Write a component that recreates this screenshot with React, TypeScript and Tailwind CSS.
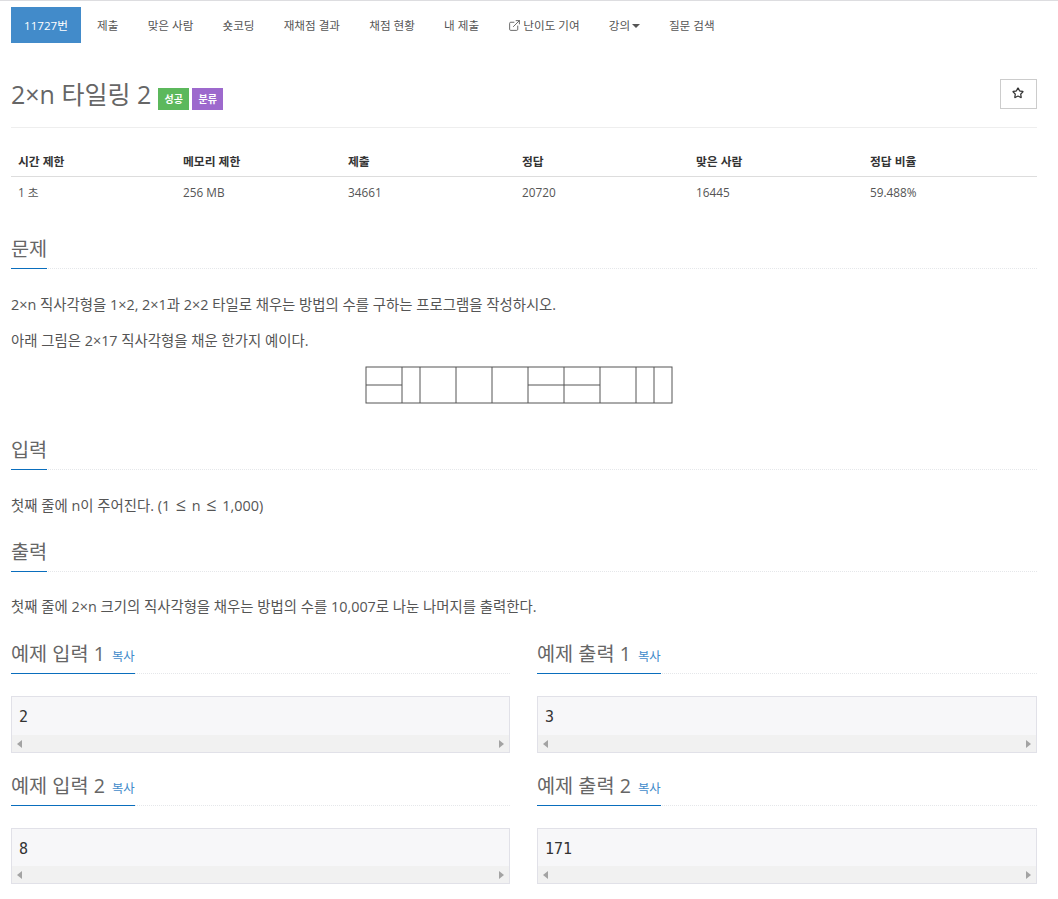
import { ExternalLink, Star } from 'lucide-react';

const font = { fontFamily: '"Open Sans", "Noto Sans CJK KR", sans-serif' };

const tabs = ['제출', '맞은 사람', '숏코딩', '재채점 결과', '채점 현황', '내 제출'];

const stats = [
  { label: '시간 제한', value: '1 초', width: 'w-[165px]' },
  { label: '메모리 제한', value: '256 MB', width: 'w-[165px]' },
  { label: '제출', value: '34661', width: 'w-[174px]' },
  { label: '정답', value: '20720', width: 'w-[174px]' },
  { label: '맞은 사람', value: '16445', width: 'w-[174px]' },
  { label: '정답 비율', value: '59.488%', width: 'flex-1' },
];

function Headline({ children, extra }: { children: React.ReactNode; extra?: string }) {
  return (
    <div className="h-[37px] border-b border-dotted border-[#e5e7ea]">
      <h2 className="inline-block h-[37px] border-b border-[#0a6ebd] text-[19.7px] leading-[33px] text-[#666]">
        {children}
        {extra && <a className="ml-[7px] text-[12.4px] font-normal text-[#428bca]">{extra}</a>}
      </h2>
    </div>
  );
}

function Sample({ title, value, short }: { title: string; value: string; short?: boolean }) {
  return (
    <div>
      <Headline extra="복사">{title}</Headline>
      <div className="mt-[22px] border border-[#e1e1e8] bg-[#f7f7f9]">
        <pre className={`${short ? 'h-[37px]' : 'h-[38px]'} pl-[7px] pt-[11px] text-[15px] leading-[18px] text-[#333]`} style={{ fontFamily: '"DejaVu Sans Mono", monospace' }}>
          {value}
        </pre>
        <div className="flex h-[17px] items-center justify-between bg-[#f1f1f1] px-[5px]">
          <span className="h-0 w-0 border-y-[4px] border-r-[5px] border-y-transparent border-r-[#a3a3a3]" />
          <span className="h-0 w-0 border-y-[4px] border-l-[5px] border-y-transparent border-l-[#a3a3a3]" />
        </div>
      </div>
    </div>
  );
}

function TilingFigure() {
  const verticals = [402, 420, 456, 492, 528, 564, 600, 636, 654];
  return (
    <svg width="308" height="38" viewBox="365 366 308 38" className="ml-[354px] mt-[15px] block">
      <rect x="366" y="367" width="306" height="36" fill="white" stroke="#555" strokeWidth="1" />
      {verticals.map((x) => (
        <line key={x} x1={x} y1="367" x2={x} y2="403" stroke="#555" strokeWidth="1" />
      ))}
      <line x1="366" y1="385" x2="402" y2="385" stroke="#555" strokeWidth="1" />
      <line x1="528" y1="385" x2="600" y2="385" stroke="#555" strokeWidth="1" />
    </svg>
  );
}

export default function App() {
  return (
    <div className="min-h-[899px] border-t border-[#dddde0] bg-white pl-[11px] pr-[21px] text-[14.4px] text-[#555]" style={font}>
      {/* tabs */}
      <ul className="flex items-center pt-[6px] text-[11.6px]">
        <li className="mr-[1.5px] flex h-[36px] w-[70px] items-center justify-center bg-[#428bca] pt-[1px] text-white">11727번</li>
        {tabs.map((t) => (
          <li key={t} className="flex h-[36px] items-center px-[14.6px] pt-[1px]">{t}</li>
        ))}
        <li className="flex h-[36px] items-center gap-[2px] px-[14.6px] pt-[1px]">
          <ExternalLink size={13} strokeWidth={1.6} />
          난이도 기여
        </li>
        <li className="flex h-[36px] items-center gap-[2px] px-[14.6px] pt-[1px]">
          강의
          <span className="h-0 w-0 border-x-[4px] border-t-[4px] border-x-transparent border-t-[#555]" />
        </li>
        <li className="flex h-[36px] items-center px-[14.2px] pt-[1px]">질문 검색</li>
      </ul>

      {/* title */}
      <div className="mt-[21px] flex h-[64px] items-start justify-between border-b border-[#eee]">
        <div className="flex items-start">
          <h1 className="text-[25px] leading-[60px] text-[#666]">2×n 타일링 2</h1>
          <span className="ml-[7px] mt-[24px] flex h-[22px] w-[31px] items-center justify-center bg-[#5cb85c] text-[10px] font-bold text-white">성공</span>
          <span className="ml-[3px] mt-[24px] flex h-[22px] w-[31px] items-center justify-center bg-[#9d69cd] text-[10px] font-bold text-white">분류</span>
        </div>
        <button className="mt-[15px] flex h-[30px] w-[37px] items-center justify-center border border-[#ccc] bg-white pb-[2px] pr-[1px] text-[#333]">
          <Star size={12} strokeWidth={2.5} />
        </button>
      </div>

      {/* stats */}
      <div className="mt-[18px] flex text-[11.8px]">
        {stats.map((s) => (
          <div key={s.label} className={s.width}>
            <div className="h-[31px] border-b border-[#ddd] pl-[7px] pt-[7px] font-bold leading-[17px] text-[#333]">{s.label}</div>
            <div className="pl-[7px] pt-[6px] leading-[18px]">{s.value}</div>
          </div>
        ))}
      </div>

      <section className="mt-[31px]">
        <Headline>문제</Headline>
        <p className="mt-[26px] leading-[20px]">2×n 직사각형을 1×2, 2×1과 2×2 타일로 채우는 방법의 수를 구하는 프로그램을 작성하시오.</p>
        <p className="mt-[16px] leading-[20px]">아래 그림은 2×17 직사각형을 채운 한가지 예이다.</p>
        <TilingFigure />
      </section>

      <section className="mt-[29px]">
        <Headline>입력</Headline>
        <p className="mt-[25px] h-[20px] leading-[20px]">
          첫째 줄에 n이 주어진다. (1<span className="mx-[1px] text-[18px] leading-none"> ≤ </span>n<span className="mx-[1px] text-[18px] leading-none"> ≤ </span>1,000)
        </p>
      </section>

      <section className="mt-[20px]">
        <Headline>출력</Headline>
        <p className="mt-[25px] leading-[20px]">첫째 줄에 2×n 크기의 직사각형을 채우는 방법의 수를 10,007로 나눈 나머지를 출력한다.</p>
      </section>

      <div className="mt-[20px] grid grid-cols-[499px_1fr] gap-x-[27px] gap-y-[16px]">
        <Sample title="예제 입력 1" value="2" />
        <Sample title="예제 출력 1" value="3" />
        <Sample title="예제 입력 2" value="8" short />
        <Sample title="예제 출력 2" value="171" short />
      </div>
    </div>
  );
}
